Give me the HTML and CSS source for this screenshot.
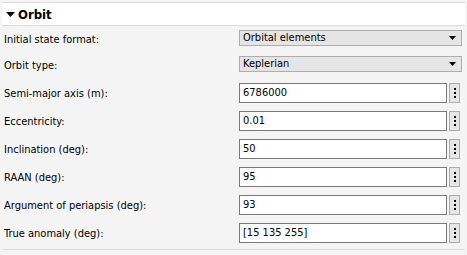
FILE: index.html
```html
<!DOCTYPE html>
<html lang="en">
<head>
    <meta charset="UTF-8">
    <title>Orbit</title>
    <link rel="stylesheet" href="styles.css">
</head>
<body>
    <div class="panel">
        <div class="header">
            <svg class="caret" width="9" height="5" viewBox="0 0 9 5"><polygon points="0,0 9,0 4.5,5" fill="#000"/></svg>
            <span>Orbit</span>
        </div>

        <div class="rows">
            <div class="row combo-row">
                <div class="label">Initial state format:</div>
                <div class="combo">
                    <span>Orbital elements</span>
                    <svg width="7" height="4" viewBox="0 0 7 4"><polygon points="0,0 7,0 3.5,4" fill="#000"/></svg>
                </div>
            </div>
            <div class="row combo-row">
                <div class="label">Orbit type:</div>
                <div class="combo">
                    <span>Keplerian</span>
                    <svg width="7" height="4" viewBox="0 0 7 4"><polygon points="0,0 7,0 3.5,4" fill="#000"/></svg>
                </div>
            </div>

            <div class="row field-row">
                <div class="label">Semi-major axis (m):</div>
                <div class="field">6786000</div>
                <div class="more"><i></i><i></i><i></i></div>
            </div>
            <div class="row field-row">
                <div class="label">Eccentricity:</div>
                <div class="field">0.01</div>
                <div class="more"><i></i><i></i><i></i></div>
            </div>
            <div class="row field-row">
                <div class="label">Inclination (deg):</div>
                <div class="field">50</div>
                <div class="more"><i></i><i></i><i></i></div>
            </div>
            <div class="row field-row">
                <div class="label">RAAN (deg):</div>
                <div class="field">95</div>
                <div class="more"><i></i><i></i><i></i></div>
            </div>
            <div class="row field-row">
                <div class="label">Argument of periapsis (deg):</div>
                <div class="field">93</div>
                <div class="more"><i></i><i></i><i></i></div>
            </div>
            <div class="row field-row">
                <div class="label">True anomaly (deg):</div>
                <div class="field">[15 135 255]</div>
                <div class="more"><i></i><i></i><i></i></div>
            </div>
        </div>
    </div>
</body>
</html>
```

FILE: styles.css
```css
body {
    margin: 0;
    background: #f4f4f4;
    color: #000;
    font-family: "DejaVu Sans Condensed", "Liberation Sans", sans-serif;
    font-size: 11px;
}
.panel {
    padding: 2px 2px 0 2px;
}
.header {
    height: 22px;
    background: #fff;
    border-top: 1px solid #dcdcdc;
    border-bottom: 1px solid #dcdcdc;
    display: flex;
    align-items: center;
    gap: 3px;
    padding-left: 4px;
    font-size: 13px;
    font-weight: bold;
}
.rows {
    padding: 0 0 3px 2px;
    border-bottom: 1px solid #dcdcdc;
}
.row {
    display: flex;
    align-items: flex-start;
}
.combo-row {
    height: 26px;
    padding-top: 0;
}
.field-row {
    height: 28px;
}
.label {
    width: 235px;
    line-height: 13px;
}
.combo-row .label {
    padding-top: 7px;
}
.field-row .label {
    padding-top: 9px;
}
.combo {
    margin-top: 4px;
    width: 221px;
    height: 14px;
    border: 1px solid #adadad;
    background: #e5e5e5;
    display: flex;
    align-items: center;
    justify-content: space-between;
    padding: 0 5px 0 3px;
    box-sizing: content-box;
    width: 213px;
    line-height: 14px;
}
.field {
    margin-top: 5px;
    width: 203px;
    height: 18px;
    line-height: 18px;
    border: 1px solid #7a7a7a;
    background: #fff;
    padding-left: 3px;
}
.more {
    margin-top: 5px;
    margin-left: 2px;
    width: 9px;
    height: 18px;
    border: 1px solid #adadad;
    background: #e6e6e6;
    display: flex;
    flex-direction: column;
    align-items: center;
    justify-content: center;
    gap: 2px;
}
.more i {
    display: block;
    width: 2px;
    height: 2px;
    background: #000;
}
```
